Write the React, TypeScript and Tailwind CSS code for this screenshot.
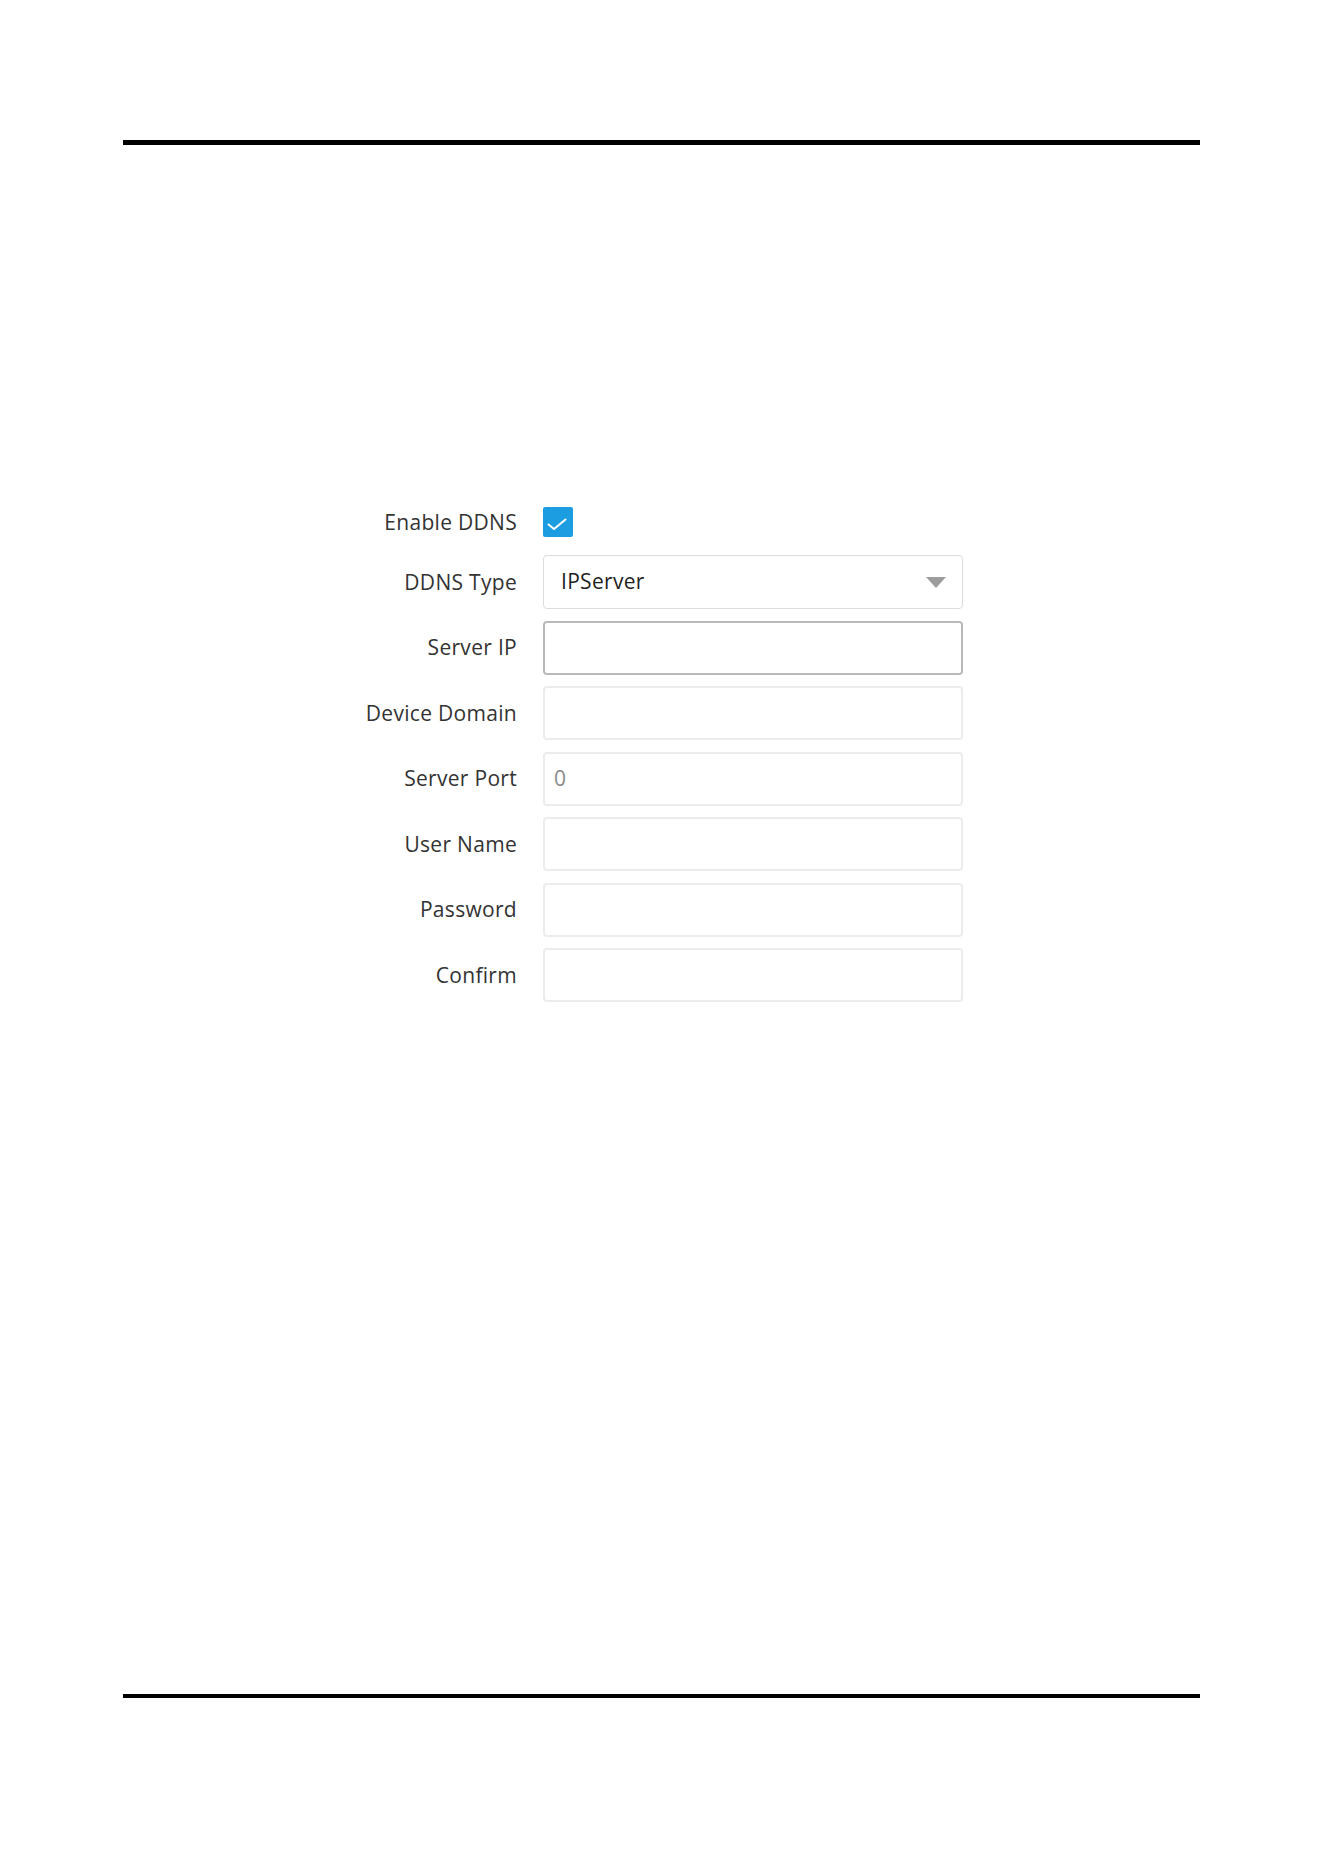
import React from 'react';

type Field = {
  label: string;
  value?: string;
  focused?: boolean;
};

const fields: Field[] = [
  { label: 'Server IP', focused: true },
  { label: 'Device Domain' },
  { label: 'Server Port', value: '0' },
  { label: 'User Name' },
  { label: 'Password' },
  { label: 'Confirm' },
];

function Label({ children }: { children: React.ReactNode }) {
  return (
    <div className="w-[420px] shrink-0 pr-[26px] text-right text-[21px] leading-none tracking-[0.3px] text-[#333333]">
      {children}
    </div>
  );
}

export default function App() {
  return (
    <div
      className="flex h-[1872px] w-[1324px] flex-col bg-white pt-[140px]"
      style={{ fontFamily: '"Open Sans", "Noto Sans", sans-serif' }}
    >
      <div className="ml-[123px] h-[5px] w-[1077px] bg-black" />

      <div className="ml-[123px] mt-[362px] flex flex-col">
        {/* enable checkbox */}
        <div className="flex h-[30px] items-center">
          <Label>Enable DDNS</Label>
          <div className="h-[30px] w-[30px] rounded-[2px] bg-[#1c9de2]">
            <svg width="30" height="30" viewBox="0 0 30 30" fill="none">
              <path d="M5.5 17.5 L11 22 L22.5 12.5" stroke="white" strokeWidth="2" strokeLinecap="round" strokeLinejoin="round" />
            </svg>
          </div>
        </div>

        <div className="mt-[18px] flex flex-col gap-[11.5px]">
          {/* type dropdown */}
          <div className="flex h-[54px] items-center">
            <Label>DDNS Type</Label>
            <div className="flex h-[54px] w-[420px] items-center justify-between rounded-[4px] border border-[#dcdcdc] pl-[17px] pr-[16px]">
              <span className="text-[21px] tracking-[0.3px] text-[#1f1f1f]">IPServer</span>
              <svg width="20" height="11" viewBox="0 0 20 11">
                <path d="M0 0 H20 L10 11 Z" fill="#9c9c9c" />
              </svg>
            </div>
          </div>

          {fields.map((f) => (
            <div key={f.label} className="flex h-[54px] items-center">
              <Label>{f.label}</Label>
              <div
                className={
                  f.focused
                    ? 'flex h-[54px] w-[420px] items-center rounded-[4px] border-2 border-[#b9b9b9] px-[9px]'
                    : 'flex h-[54px] w-[420px] items-center rounded-[4px] border-2 border-[#ececec] px-[9px]'
                }
              >
                {f.value && <span className="text-[21px] text-[#8a8a8a]">{f.value}</span>}
              </div>
            </div>
          ))}
        </div>
      </div>

      <div className="mb-[174px] ml-[123px] mt-auto h-[4px] w-[1077px] bg-black" />
    </div>
  );
}
